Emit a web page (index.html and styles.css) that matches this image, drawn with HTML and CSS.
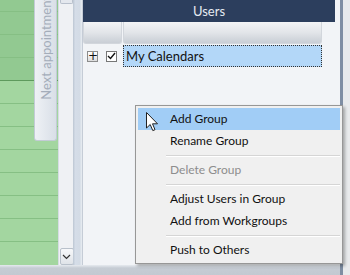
FILE: index.html
```html
<!DOCTYPE html>
<html lang="en">
<head>
  <meta charset="UTF-8" />
  <title>Users</title>
  <link rel="stylesheet" href="styles.css">
</head>
<body>
  <div class="window">
    <div class="main">
      <div class="calendar">
        <div class="slot first morning"></div>
        <div class="slot morning"></div>
        <div class="slot morning"></div>
        <div class="slot morning hour"></div>
        <div class="slot"></div>
        <div class="slot"></div>
        <div class="slot"></div>
        <div class="slot"></div>
        <div class="slot"></div>
        <div class="slot"></div>
        <div class="slot"></div>
        <div class="slot last"></div>
        <div class="next-tab"><span>Next appointment</span></div>
      </div>

      <div class="vscroll">
        <div class="thumb"></div>
        <div class="scroll-down">
          <svg width="9" height="6" viewBox="0 0 9 6"><path d="M1 1 L4.5 4.5 L8 1" fill="none" stroke="#333" stroke-width="1.2"/></svg>
        </div>
      </div>

      <div class="splitter"></div>

      <div class="users-pane">
        <div class="pane-title">Users</div>
        <div class="grid-head">
          <div class="col-tree"></div>
          <div class="col-name"></div>
        </div>
        <div class="tree-row">
          <div class="tree-cell">
            <span class="expander">+</span>
            <span class="check">
              <svg width="9" height="8" viewBox="0 0 9 8"><path d="M1 4 L3.5 6.5 L8 1" fill="none" stroke="#111" stroke-width="1.4"/></svg>
            </span>
          </div>
          <div class="name-cell selected">My Calendars</div>
        </div>
      </div>

      <div class="edge"></div>
    </div>
    <div class="statusbar"></div>

    <ul class="context-menu">
      <li class="item active">Add Group</li>
      <li class="item">Rename Group</li>
      <li class="sep"></li>
      <li class="item disabled">Delete Group</li>
      <li class="sep"></li>
      <li class="item">Adjust Users in Group</li>
      <li class="item">Add from Workgroups</li>
      <li class="sep"></li>
      <li class="item">Push to Others</li>
    </ul>

    <svg class="cursor" width="13" height="20" viewBox="0 0 13 20">
      <path d="M0.5 0.5 L0.5 16 L4.2 12.5 L6.8 18.6 L9 17.7 L6.5 11.8 L11.5 11.8 Z" fill="#fff" stroke="#222" stroke-width="1"/>
    </svg>
  </div>
</body>
</html>
```

FILE: styles.css
```css
* { box-sizing: border-box; }

body {
  margin: 0;
  font-family: Lato, "Open Sans", sans-serif;
  background-color: #e8eaec;
}

.window {
  position: relative;
  width: 350px;
  height: 275px;
  overflow: hidden;
  display: flex;
  flex-direction: column;
}

.main {
  display: flex;
  height: 265px;
}

/* calendar strip on the left */
.calendar {
  position: relative;
  width: 58px;
  background-color: #a3d6a0;
  display: flex;
  flex-direction: column;
}

.slot {
  height: 23px;
  border-bottom: 1px solid #86bf84;
  flex-shrink: 0;
}

.slot.first { height: 12px; }

.slot.morning { background-color: #92c991; }

.slot.hour { border-bottom-color: #5e9a5d; }

.slot.last { border-bottom: none; }

.next-tab {
  position: absolute;
  left: 34px;
  top: 0;
  width: 23px;
  height: 141px;
  background: linear-gradient(to right, #eef1f5, #d9dfe7);
  border: 1px solid #c3cbd6;
  border-top: none;
  border-radius: 0 0 3px 3px;
  display: flex;
  align-items: center;
  justify-content: flex-end;
  flex-direction: column;
  padding-bottom: 40px;
}

.next-tab span {
  writing-mode: vertical-rl;
  transform: rotate(180deg);
  font-size: 13px;
  color: #a4adba;
  white-space: nowrap;
}

/* vertical scrollbar */
.vscroll {
  width: 15px;
  background-color: #eff1f4;
  border-left: 1px solid #d6dce4;
  display: flex;
  flex-direction: column;
  justify-content: space-between;
  align-items: center;
}

.thumb {
  width: 13px;
  height: 4px;
  background: #e4e8ee;
  border: 1px solid #b8c0cc;
  border-top: none;
  border-radius: 0 0 2px 2px;
}

.scroll-down {
  width: 14px;
  height: 17px;
  margin-left: 1px;
  background: linear-gradient(#f7f8fa, #dfe3e8);
  border: 1px solid #b9c1cb;
  border-radius: 2px;
  display: flex;
  align-items: center;
  justify-content: center;
}

.splitter {
  width: 9px;
  background: linear-gradient(to right, #bcc6d2, #d5dde8 25%, #d3dbe5 75%, #e9edf2);
}

/* users pane */
.users-pane {
  width: 258px;
  background-color: #f2f4f7;
  border-left: 1px solid #c5ccd6;
  display: flex;
  flex-direction: column;
}

.pane-title {
  width: 252px;
  height: 22px;
  background-color: #2c3e5d;
  color: #e6ebf2;
  font-size: 13px;
  text-align: center;
  line-height: 22px;
}

.grid-head {
  display: flex;
  gap: 1px;
  height: 22px;
  margin-bottom: 1px;
}

.col-tree,
.col-name {
  background: linear-gradient(#f3f4f6, #e2e5e9 50%, #c9ced5);
  border: 1px solid #d2d6dc;
  border-top: none;
  border-radius: 0 0 3px 3px;
}

.col-tree { width: 39px; }

.col-name { width: 199px; }

.tree-row {
  display: flex;
  gap: 1px;
  height: 22px;
}

.tree-cell {
  width: 39px;
  display: flex;
  align-items: center;
  gap: 8px;
  padding-left: 4px;
}

.expander {
  width: 11px;
  height: 11px;
  border: 1px solid #8c8c8c;
  background: linear-gradient(#ffffff, #dcdcdc);
  font-size: 12px;
  line-height: 8px;
  text-align: center;
  color: #111;
  font-family: "DejaVu Sans", sans-serif;
}

.check {
  width: 11px;
  height: 11px;
  border: 1px solid #777;
  background-color: #fff;
  display: flex;
  align-items: center;
  justify-content: center;
}

.name-cell {
  width: 199px;
  font-size: 13px;
  color: #111;
  line-height: 20px;
  padding-left: 2px;
}

.name-cell.selected {
  background-color: #b3d7f8;
  border: 1px dotted #333;
}

.edge {
  flex: 1;
  border-left: 3px solid #7f8ea3;
  background-color: #e8eaec;
}

.statusbar {
  height: 10px;
  background: linear-gradient(#e6eaef, #c6ccd4 30%, #c3c9d1);
  border-right: 7px solid #e8eaec;
  box-shadow: inset -3px 0 #7f8ea3;
}

/* context menu */
.context-menu {
  position: absolute;
  left: 135px;
  top: 105px;
  width: 208px;
  margin: 0;
  padding: 2px 2px 2px;
  list-style: none;
  background-color: #f0f0f0;
  border: 1px solid #979797;
  box-shadow: 2px 2px 3px rgba(0, 0, 0, 0.3);
  font-size: 12px;
  color: #111;
}

.item {
  height: 22px;
  line-height: 22px;
  padding-left: 32px;
}

.item.active {
  background-color: #a1cdf6;
}

.item.disabled {
  color: #8d8d8d;
}

.sep {
  height: 7px;
  margin-left: 28px;
  display: flex;
  flex-direction: column;
  justify-content: center;
}

.sep::before {
  content: "";
  border-top: 1px solid #d5d5d5;
  border-bottom: 1px solid #fff;
}

.cursor {
  position: absolute;
  left: 146px;
  top: 112px;
}
```
